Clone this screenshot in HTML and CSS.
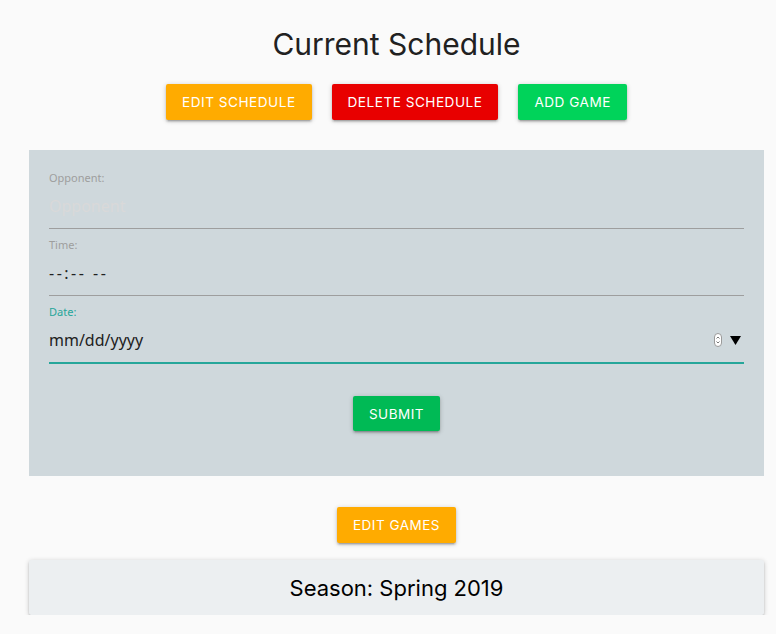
FILE: index.html
```html
<!DOCTYPE html>
<html>
<head>
<meta charset="utf-8">
<link rel="stylesheet" href="styles.css">
</head>
<body>
<div class="page">
  <h1 class="title">Current Schedule</h1>
  <div class="actions">
    <button class="btn btn-amber">Edit Schedule</button>
    <button class="btn btn-red">Delete Schedule</button>
    <button class="btn btn-green">Add Game</button>
  </div>
  <form class="panel">
    <div class="field">
      <label class="label">Opponent:</label>
      <div class="control">
        <input class="input" type="text" placeholder="Opponent">
      </div>
    </div>
    <div class="field">
      <label class="label">Time:</label>
      <div class="control">
        <input class="input input-time" type="text" value="--:-- --" readonly>
      </div>
    </div>
    <div class="field field-active">
      <label class="label">Date:</label>
      <div class="control">
        <input class="input" type="text" value="mm/dd/yyyy" readonly>
        <span class="spinner"><svg width="8" height="14" viewBox="0 0 8 14"><rect x="0.5" y="0.5" width="7" height="13" rx="3.5" fill="#fff" stroke="#9a9a9a"/><path d="M2.5 5.5 L4 4 L5.5 5.5" fill="none" stroke="#555" stroke-width="0.8"/><path d="M2.5 8.5 L4 10 L5.5 8.5" fill="none" stroke="#555" stroke-width="0.8"/></svg></span>
        <span class="caret"><svg width="11" height="9" viewBox="0 0 11 9"><path d="M0 0 H11 L5.5 9 Z" fill="#000"/></svg></span>
      </div>
    </div>
    <div class="submit-row">
      <button type="button" class="btn btn-submit">Submit</button>
    </div>
  </form>
  <div class="games-row">
    <button class="btn btn-amber">Edit Games</button>
  </div>
  <div class="season-card">Season: Spring 2019</div>
</div>
</body>
</html>
```

FILE: styles.css
```css
* { box-sizing: border-box; }
html, body {
  margin: 0;
  background: #fafafa;
  font-family: Inter, Roboto, sans-serif;
  color: #212121;
}
.page {
  margin-left: 29px;
  width: 735px;
}
.title {
  margin: 26px 0 0;
  font-size: 30px;
  line-height: 36px;
  font-weight: 400;
  text-align: center;
  color: #212121;
}
.actions {
  margin-top: 22px;
  display: flex;
  justify-content: center;
  gap: 20px;
}
.btn {
  border: none;
  border-radius: 2px;
  height: 36px;
  padding: 0 16px;
  font-family: Inter, Roboto, sans-serif;
  font-size: 13.6px;
  font-weight: 400;
  letter-spacing: 0.5px;
  text-transform: uppercase;
  color: #fff;
  box-shadow: 0 2px 2px 0 rgba(0,0,0,.14), 0 3px 1px -2px rgba(0,0,0,.12), 0 1px 5px 0 rgba(0,0,0,.2);
  cursor: pointer;
}
.btn-amber { background: #ffab00; }
.btn-red { background: #e80000; }
.btn-green { background: #00d35a; }
.btn-submit { background: #00ba55; height: 35px; font-size: 13.5px; }
.games-row .btn { font-size: 13.5px; }
.panel {
  margin-top: 30px;
  background: #cfd8dc;
  padding: 22px 20px 45px;
}
.field + .field { margin-top: 10px; }
.label {
  display: block;
  font-family: "Noto Sans", sans-serif;
  font-size: 11px;
  line-height: 12px;
  color: #9e9e9e;
}
.control {
  display: flex;
  align-items: center;
  height: 45px;
  border-bottom: 1px solid #9e9e9e;
}
.input {
  flex: 1;
  min-width: 0;
  border: none;
  background: transparent;
  outline: none;
  height: 44px;
  padding: 0;
  font-family: "Noto Sans", sans-serif;
  font-size: 16px;
  color: #212121;
}
.input-time { letter-spacing: 2.5px; }
.input::placeholder { color: #d9d9d9; }
.field-active .label { color: #26a69a; }
.field-active .control { border-bottom: 2px solid #26a69a; height: 46px; }
.spinner {
  display: flex;
  margin-right: 8px;
}
.caret {
  display: flex;
  margin-right: 3px;
}
.submit-row {
  margin-top: 32px;
  display: flex;
  justify-content: center;
}
.games-row {
  margin-top: 31px;
  display: flex;
  justify-content: center;
}
.season-card {
  margin-top: 17px;
  height: 55px;
  background: #eceff1;
  display: flex;
  align-items: center;
  justify-content: center;
  font-size: 22px;
  color: #000;
  border-radius: 2px;
  box-shadow: 0 2px 2px 0 rgba(0,0,0,.14), 0 3px 1px -2px rgba(0,0,0,.12), 0 1px 5px 0 rgba(0,0,0,.2);
}
```
